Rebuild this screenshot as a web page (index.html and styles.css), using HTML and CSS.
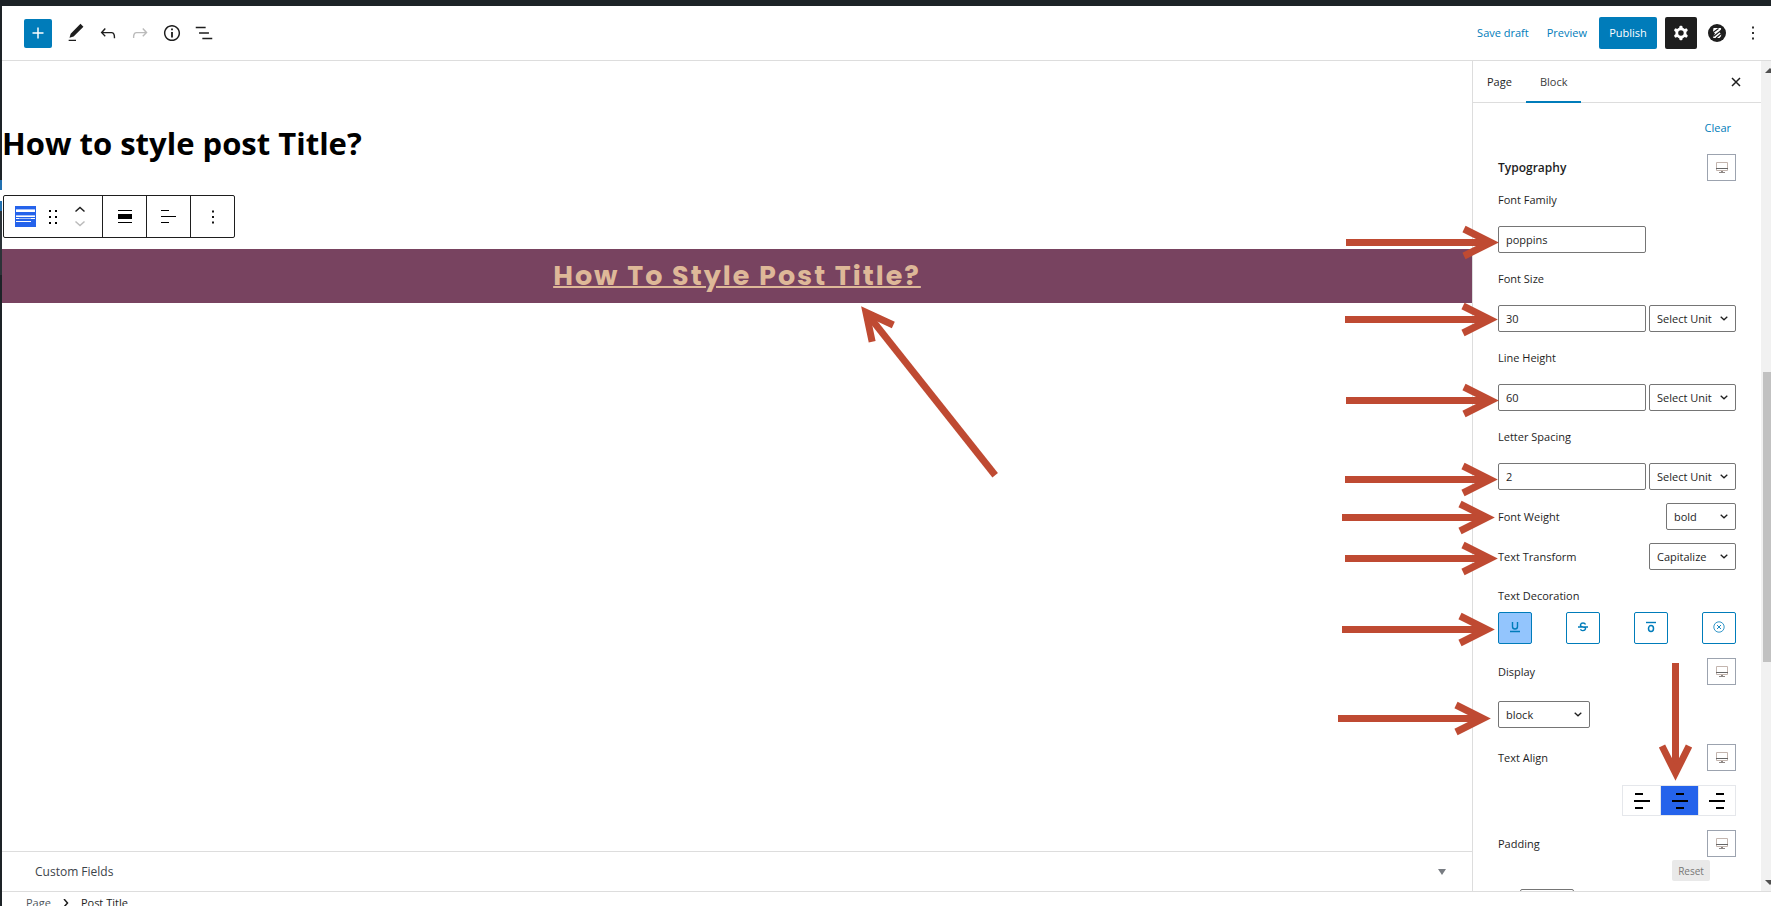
FILE: index.html
```html
<!DOCTYPE html>
<html lang="en">
<head>
<meta charset="utf-8">
<title>How to style post Title?</title>
<link rel="stylesheet" href="styles.css">
</head>
<body>
<div class="app">
  <div class="admin-bar"></div>
  <div class="admin-menu"></div>

  <header class="header">
    <div class="header-tools">
      <button class="inserter" type="button" aria-label="Add block"><svg class="icon" viewBox="0 0 24 24"><path d="M18 11.2h-5.2V6h-1.6v5.2H6v1.6h5.2V18h1.6v-5.2H18z"/></svg></button>
      <button class="tool" type="button" aria-label="Tools"><svg class="icon" viewBox="0 0 24 24"><path d="M20.1 5.1L16.9 2 6.2 12.7l-1.3 4.4 4.5-1.3L20.1 5.1zM4 20.8h8v-1.5H4v1.5z"/></svg></button>
      <button class="tool" type="button" aria-label="Undo"><svg class="icon" viewBox="0 0 24 24"><path d="M18.3 11.7c-.6-.6-1.4-.9-2.3-.9H6.7l2.9-3.3-1.1-1-4.5 5L8.5 16l1-1-2.7-2.7H16c.5 0 .9.2 1.3.5 1 1 1 3.4 1 4.5v.3h1.5v-.2c0-1.5 0-4.3-1.5-5.7z"/></svg></button>
      <button class="tool is-faded" type="button" aria-label="Redo"><svg class="icon" viewBox="0 0 24 24"><path d="M15.6 6.5l-1.1 1 2.9 3.3H8c-.9 0-1.7.3-2.3.9-1.4 1.5-1.4 4.2-1.4 5.6v.2h1.5v-.3c0-1.1 0-3.5 1-4.5.3-.3.7-.5 1.3-.5h9.2L14.5 15l1.1 1.1 4.6-4.6-4.6-5z"/></svg></button>
      <button class="tool" type="button" aria-label="Details"><svg class="icon" viewBox="0 0 24 24"><path d="M12 3.2c-4.8 0-8.8 3.9-8.8 8.8 0 4.8 3.9 8.8 8.8 8.8 4.8 0 8.8-3.9 8.8-8.8 0-4.8-4-8.8-8.8-8.8zm0 16c-4 0-7.2-3.3-7.2-7.2C4.8 8 8 4.8 12 4.8s7.2 3.3 7.2 7.2c0 4-3.2 7.2-7.2 7.2zM11 17h2v-6h-2v6zm0-8h2V7h-2v2z"/></svg></button>
      <button class="tool" type="button" aria-label="List view"><svg class="icon" viewBox="0 0 24 24"><path d="M13.8 5.2H3v1.5h10.8V5.2zm-3.6 12v1.5H21v-1.5H10.2zm7.2-6H6.6v1.5h10.8v-1.5z"/></svg></button>
    </div>
    <div class="header-actions">
      <button class="link-button" type="button">Save draft</button>
      <button class="link-button" type="button">Preview</button>
      <button class="publish" type="button">Publish</button>
      <button class="settings" type="button" aria-label="Settings"><svg class="icon" viewBox="0 0 24 24"><path fill-rule="evenodd" d="M10.289 4.836A1 1 0 0111.275 4h1.306a1 1 0 01.987.836l.244 1.466c.787.26 1.503.679 2.108 1.218l1.393-.522a1 1 0 011.216.437l.653 1.13a1 1 0 01-.23 1.273l-1.148.944a6.025 6.025 0 010 2.435l1.149.946a1 1 0 01.23 1.272l-.653 1.13a1 1 0 01-1.216.437l-1.394-.522c-.605.54-1.32.958-2.108 1.218l-.244 1.466a1 1 0 01-.987.836h-1.306a1 1 0 01-.986-.836l-.244-1.466a5.995 5.995 0 01-2.108-1.218l-1.394.522a1 1 0 01-1.217-.436l-.653-1.131a1 1 0 01.23-1.272l1.149-.946a6.026 6.026 0 010-2.435l-1.148-.944a1 1 0 01-.23-1.272l.653-1.131a1 1 0 011.217-.437l1.393.522a5.994 5.994 0 012.108-1.218l.244-1.466zM14.929 12a3 3 0 11-6 0 3 3 0 016 0z"/></svg></button>
      <button class="plugin" type="button" aria-label="Plugin settings"><svg class="plugin-logo" viewBox="0 0 18 18"><circle cx="9" cy="9" r="9" fill="#1e1e1e"/><path d="M5.500 4h7q1 0 .5 1.200L11.500 8.500l1.700 1.500q.6 2.500-1.700 4H5.500l-.5-1 2-3.500L5 7.500z" fill="#fff"/><path d="M5 8.500L10.500 4.500M5.500 12.500L13 6.500M8 14L13.500 9.500" stroke="#1e1e1e" stroke-width="1.100"/></svg></button>
      <button class="more" type="button" aria-label="Options"><svg class="icon" viewBox="0 0 24 24"><path d="M13 19h-2v-2h2v2zm0-6h-2v-2h2v2zm0-6h-2V5h2v2z"/></svg></button>
    </div>
  </header>

  <main class="editor">
    <h1 class="post-title">How to style post Title?</h1>
    <div class="block-toolbar" role="toolbar" aria-label="Block tools">
      <div class="toolbar-group">
        <button class="tb-block" type="button" aria-label="Post title block"><svg width="21" height="21" viewBox="0 0 21 21"><path fill="#2563eb" d="M0 0h21v21H0z"/><path fill="#fff" d="M1 4h19v2H1zM1 10h19v1H1zM1 12h19v1H1zM1 15h15v1H1z"/><path fill="#a8c1f7" d="M1 3h19v1H1zM4 12h12v1H4zM1 9h19v1H1z"/></svg></button>
        <button class="tb-drag" type="button" aria-label="Drag"><svg width="18" height="18" viewBox="0 0 18 18"><path d="M5 4h2V2H5v2zm6-2v2h2V2h-2zm-6 8h2V8H5v2zm6 0h2V8h-2v2zm-6 6h2v-2H5v2zm6 0h2v-2h-2v2z"/></svg></button>
        <button class="tb-move" type="button" aria-label="Move up or down"><svg width="12" height="21" viewBox="0 0 12 21" fill="none" stroke-width="1.500"><path d="M1.500 5.500L6 1.500l4.500 4" stroke="#1e1e1e"/><path d="M1.500 15.500L6 19.500l4.500-4" stroke="#bbb"/></svg></button>
      </div>
      <button class="toolbar-group tb-single" type="button" aria-label="Align"><svg width="14" height="14" viewBox="0 0 14 14"><path d="M0 0h14v1H0zM0 4h14v5H0zM0 12h14v1H0z"/></svg></button>
      <button class="toolbar-group tb-single" type="button" aria-label="Align text"><svg width="15" height="14" viewBox="0 0 15 14"><path d="M0 0h8v1H0zM0 6h15v1H0zM0 12h8v1H0z"/></svg></button>
      <button class="toolbar-group tb-single" type="button" aria-label="Options"><svg width="22" height="22" viewBox="0 0 24 24"><path d="M13 19h-2v-2h2v2zm0-6h-2v-2h2v2zm0-6h-2V5h2v2z"/></svg></button>
    </div>
    <h2 class="banner">How To Style Post Title?</h2>
    <button class="custom-fields" type="button"><span>Custom Fields</span><svg width="8" height="6" viewBox="0 0 8 6"><path d="M0 0h8L4 6z" fill="#787c82"/></svg></button>
  </main>

  <aside class="sidebar">
    <div class="tabs">
      <button class="tab" type="button">Page</button>
      <button class="tab is-active" type="button">Block</button>
      <button class="close" type="button" aria-label="Close settings"><svg width="10" height="10" viewBox="0 0 10 10"><path d="M1 1l8 8M9 1L1 9" stroke="#1e1e1e" stroke-width="1.500"/></svg></button>
    </div>
    <div class="panel">
      <button class="link-button clear" type="button">Clear</button>
      <div class="row head-row">
        <h3 class="panel-title">Typography</h3>
        <button class="device" type="button" aria-label="Typography device"><svg class="monitor" viewBox="0 0 14 12"><use href="#monitor"/></svg></button>
      </div>
      <div class="fields">
        <div class="field"><label for="family">Font Family</label><div class="controls"><input id="family" type="text" value="poppins"></div></div>
        <div class="field"><label for="size">Font Size</label><div class="controls"><input id="size" type="text" value="30"><select aria-label="Font size unit"><option>Select Unit</option></select></div></div>
        <div class="field"><label for="line">Line Height</label><div class="controls"><input id="line" type="text" value="60"><select aria-label="Line height unit"><option>Select Unit</option></select></div></div>
        <div class="field"><label for="spacing">Letter Spacing</label><div class="controls"><input id="spacing" type="text" value="2"><select aria-label="Letter spacing unit"><option>Select Unit</option></select></div></div>
      </div>
      <div class="row select-row"><label for="weight">Font Weight</label><select id="weight" class="weight"><option>bold</option></select></div>
      <div class="row select-row"><label for="transform">Text Transform</label><select id="transform"><option>Capitalize</option></select></div>
      <div class="decoration-label">Text Decoration</div>
      <div class="decorations">
        <button class="decoration is-on" type="button" aria-label="Underline"><svg width="12" height="12" viewBox="0 0 12 12"><path d="M3.500 1v4.500q0 2.500 2.500 2.500t2.500-2.500V1M1 10.500h10" fill="none" stroke="currentColor" stroke-width="1.400"/></svg></button>
        <button class="decoration" type="button" aria-label="Line through"><svg width="12" height="12" viewBox="0 0 12 12"><path d="M8.500 3.500Q8 2 6 2T3.500 3.700 6 6t2.500 2T6 9.600 3.500 8.300M1 6h10" fill="none" stroke="currentColor" stroke-width="1.400"/></svg></button>
        <button class="decoration" type="button" aria-label="Overline"><svg width="12" height="12" viewBox="0 0 12 12"><path d="M1 1.500h10" stroke="currentColor" stroke-width="1.400"/><ellipse cx="6" cy="7.500" rx="2.500" ry="3" fill="none" stroke="currentColor" stroke-width="1.500"/></svg></button>
        <button class="decoration" type="button" aria-label="None"><svg width="12" height="12" viewBox="0 0 12 12"><circle cx="6" cy="6" r="5.200" fill="none" stroke="currentColor" stroke-width=".8"/><path d="M4 4l4 4M8 4L4 8" stroke="currentColor" stroke-width=".9"/></svg></button>
      </div>
      <div class="row display-row">
        <label for="display">Display</label>
        <button class="device" type="button" aria-label="Display device"><svg class="monitor" viewBox="0 0 14 12"><use href="#monitor"/></svg></button>
      </div>
      <select id="display" class="display"><option>block</option></select>
      <div class="row align-row">
        <span>Text Align</span>
        <button class="device" type="button" aria-label="Text align device"><svg class="monitor" viewBox="0 0 14 12"><use href="#monitor"/></svg></button>
      </div>
      <div class="aligns">
        <button type="button" aria-label="Left"><svg width="16" height="16" viewBox="0 0 16 16"><path d="M1 0h8v2H1zM0 7h16v2H0zM1 14h8v2H1z"/></svg></button>
        <button class="is-on" type="button" aria-label="Center"><svg width="16" height="16" viewBox="0 0 16 16"><path d="M4 0h8v2H4zM0 7h16v2H0zM4 14h8v2H4z"/></svg></button>
        <button type="button" aria-label="Right"><svg width="16" height="16" viewBox="0 0 16 16"><path d="M7 0h8v2H7zM0 7h16v2H0zM7 14h8v2H7z"/></svg></button>
      </div>
      <div class="row padding-row">
        <label for="padding-top">Padding</label>
        <button class="device" type="button" aria-label="Padding device"><svg class="monitor" viewBox="0 0 14 12"><use href="#monitor"/></svg></button>
      </div>
      <button class="reset" type="button">Reset</button>
      <input id="padding-top" class="padding-input" type="text">
    </div>
    <div class="scrollbar">
      <svg class="scroll-arrow" viewBox="0 0 10 5"><path d="M0 5L5 0l5 5z"/></svg>
      <div class="track"><div class="thumb"></div></div>
      <svg class="scroll-arrow" viewBox="0 0 10 5"><path d="M0 0l5 5 5-5z"/></svg>
    </div>
  </aside>

  <footer class="footer">
    <nav class="breadcrumb" aria-label="Block breadcrumb"><a href="#">Page</a><svg width="6" height="8" viewBox="0 0 6 8"><path d="M1 0l3.500 4L1 8" fill="none" stroke="#1e1e1e" stroke-width="1.500"/></svg><span>Post Title</span></nav>
  </footer>
</div>

<svg class="annotations" width="1771" height="906" viewBox="0 0 1771 906" aria-hidden="true">
  <defs>
    <g id="monitor"><path d="M1.500 .5h11v8h-11z" fill="#fff" stroke="#c3b5ae"/><path d="M1 6.500h12" stroke="#666"/><path d="M6 9h2v1H6zM4 10h6v1H4z" fill="#8d8785"/></g>
    <path id="head" d="M-35-13.500L-8 0L-35 13.500"/>
    <g id="arrow"><path d="M-153 0H-10"/><use href="#head"/></g>
  </defs>
  <g fill="none" stroke="#bf4a32" stroke-width="7">
    <use href="#arrow" x="1499" y="242.500"/>
    <use href="#arrow" x="1498" y="319.500"/>
    <use href="#arrow" x="1499" y="400.500"/>
    <use href="#arrow" x="1498" y="479.500"/>
    <use href="#arrow" x="1495" y="517.500"/>
    <use href="#arrow" x="1498" y="558.500"/>
    <use href="#arrow" x="1495" y="629.500"/>
    <use href="#arrow" x="1491" y="718.500"/>
    <g transform="translate(1675.500 781) rotate(90)"><path d="M-118 0H-10"/><use href="#head"/></g>
    <g transform="translate(861 306) rotate(231.600)"><path d="M-216 0H-10"/><use href="#head"/></g>
  </g>
</svg>
</body>
</html>
```
FILE: styles.css
```css
* { box-sizing: border-box; }

body {
  margin: 0;
  background: #fff;
  color: #1e1e1e;
  font: 11px/16px "Open Sans", "Noto Sans", sans-serif;
  overflow: hidden;
}

button, input, select { font: inherit; color: inherit; margin: 0; }
button { padding: 0; border: 0; background: none; display: flex; align-items: center; justify-content: center; }
h1, h2, h3 { margin: 0; }
svg { display: block; flex: none; }

.app {
  display: grid;
  grid-template: "bar bar bar" 6px "menu header header" 55px "menu editor side" 1fr "menu footer footer" 15px / 2px 1fr 299px;
  height: 100vh;
  overflow: hidden;
}

.admin-bar { grid-area: bar; background: #1d2327; }
.admin-menu {
  grid-area: menu;
  background: linear-gradient(#1d2327 174px, #2271b1 174px 184px, #fff 184px 195px, #2271b1 195px 205px, #2c3338 205px 269px, #1d2327 269px);
}

.header {
  grid-area: header;
  display: flex;
  align-items: center;
  justify-content: space-between;
  padding: 0 7px 0 22px;
  border-bottom: 1px solid #ddd;
}
.header-tools, .header-actions { display: flex; align-items: center; }
.icon { width: 22px; height: 22px; fill: currentColor; }
.inserter { width: 28px; height: 29px; margin-right: 8px; border-radius: 2px; background: #007cba; color: #fff; }
.tool { width: 32px; height: 32px; }
.is-faded { color: #bbb; }
.link-button { color: #007cba; }
.header-actions .link-button { margin-right: 18px; }
.header-actions .link-button + .link-button { margin-right: 12px; }
.publish { width: 58px; height: 32px; border-radius: 2px; background: #007cba; color: #fff; }
.settings { width: 32px; height: 32px; margin-left: 8px; border-radius: 2px; background: #1e1e1e; color: #fff; }
.plugin { width: 32px; height: 32px; margin-left: 4px; }
.plugin-logo { width: 18px; height: 18px; }
.more { width: 22px; height: 32px; margin-left: 9px; }

.editor { grid-area: editor; display: flex; flex-direction: column; min-width: 0; }
.post-title { margin-top: 62px; font-size: 31px; line-height: 40px; font-weight: 700; color: #000; }
.block-toolbar {
  display: flex;
  align-self: flex-start;
  height: 43px;
  margin: 32px 0 0 1px;
  border: 1px solid #1e1e1e;
  border-radius: 2px;
}
.toolbar-group { display: flex; align-items: center; }
.toolbar-group + .toolbar-group { border-left: 1px solid #1e1e1e; }
.toolbar-group:first-child { padding: 0 16px 0 11px; gap: 8px; }
.tb-single { width: 44px; }
.tb-move { margin-left: 4px; }
.banner {
  margin-top: 11px;
  background: #784360;
  color: #deb898;
  font: 700 27px/54px Poppins, Inter, sans-serif;
  letter-spacing: 2px;
  text-align: center;
  text-decoration: underline;
  text-decoration-thickness: 2px;
}
.custom-fields {
  justify-content: space-between;
  height: 40px;
  margin-top: auto;
  padding: 0 26px 0 33px;
  border-top: 1px solid #ddd;
  font-size: 12px;
  color: #3c434a;
}

.sidebar {
  grid-area: side;
  display: grid;
  grid-template: "tabs scroll" 42px "panel scroll" 1fr / 1fr 10px;
  min-height: 0;
  border-left: 1px solid #ddd;
}
.tabs { grid-area: tabs; display: flex; border-bottom: 1px solid #ddd; }
.tab { padding: 0 14px; font-size: 11px; font-weight: 500; }
.tab.is-active { box-shadow: inset 0 -2px #007cba; margin-bottom: -1px; color: #3c3c3c; }
.close { margin-left: auto; padding: 0 20px; }

.panel { grid-area: panel; padding: 17px 25px 0; min-height: 0; overflow: hidden; display: flex; flex-direction: column; }
.clear { align-self: flex-end; margin: 0 5px 18px 0; }
.row { display: flex; align-items: center; justify-content: space-between; height: 27px; flex: none; }
.panel-title { font-size: 12px; line-height: 16px; font-weight: 600; }
.device { width: 29px; height: 27px; border: 1px solid #9ca3af; }
.monitor { width: 14px; height: 12px; }
.fields { display: flex; flex-direction: column; gap: 18px; margin: 11px 0 13px; }
.field { display: flex; flex-direction: column; gap: 18px; }
.controls { display: flex; gap: 3px; }
input, select { height: 27px; padding: 0 7px; border: 1px solid #757575; border-radius: 2px; background: #fff; outline: none; }
input { width: 148px; }
select {
  appearance: none;
  width: 87px;
  background: #fff url("data:image/svg+xml,%3Csvg xmlns='http://www.w3.org/2000/svg' width='8' height='5'%3E%3Cpath d='M.7.8L4 3.800 7.300.8' fill='none' stroke='%231e1e1e' stroke-width='1.300'/%3E%3C/svg%3E") no-repeat right 7px center;
}
.select-row { margin-bottom: 13px; }
.weight { width: 70px; }
.decoration-label { margin-top: 5px; }
.decorations { display: flex; justify-content: space-between; margin: 8px 0 14px; }
.decoration { width: 34px; height: 32px; padding-bottom: 3px; border: 1px solid #007cba; border-radius: 2px; color: #007cba; }
.decoration.is-on { background: #93c5fd; }
.display { width: 92px; margin: 16px 0; flex: none; }
.aligns { display: flex; align-self: flex-end; margin: 14px 0; border: 1px solid #e5e7eb; flex: none; }
.aligns button { width: 37px; height: 29px; }
.aligns button + button { border-left: 1px solid #e5e7eb; }
.aligns button.is-on { width: 38px; background: #2563eb; }
.reset { align-self: flex-end; width: 38px; height: 21px; margin: 3px 26px 8px 0; border-radius: 2px; background: #e9e9e9; color: #777; font-size: 10px; flex: none; }
.padding-input { width: 54px; margin-left: 22px; flex: none; }

.scrollbar { grid-area: scroll; display: flex; flex-direction: column; padding: 7px 0 6px; background: #f1f1f1; overflow: hidden; }
.scroll-arrow { width: 10px; height: 5px; margin-left: 4px; fill: #505050; }
.track { flex: 1; display: grid; grid-template-rows: 300fr 290fr 219fr; }
.thumb { grid-row: 2; margin-left: 2px; background: #c1c1c1; }

.footer { grid-area: footer; border-top: 1px solid #ddd; }
.breadcrumb { display: flex; align-items: center; gap: 12px; padding: 3px 0 0 24px; }
.breadcrumb a { color: #50575e; text-decoration: none; }

/* Callout arrows drawn over the interface */
.annotations { position: absolute; top: 0; right: 0; pointer-events: none; }
```
